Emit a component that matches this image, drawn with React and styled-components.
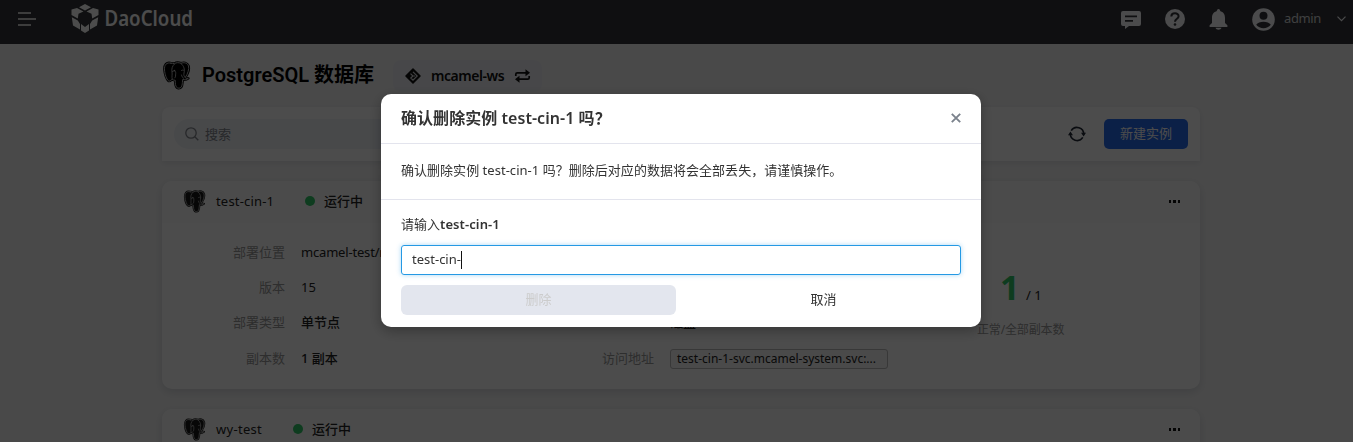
import React from "react";
import styled, { createGlobalStyle } from "styled-components";

const GlobalStyle = createGlobalStyle`
  * { box-sizing: border-box; }
  html, body { margin: 0; height: 442px; overflow: hidden; }
  body {
    background: #f5f5f5;
    color: #222;
    font: 13px/20px "Noto Sans", "Noto Sans CJK SC", sans-serif;
  }
  button, input { font: inherit; border: 0; padding: 0; background: none; }
`;

const Page = styled.div`
  height: 442px;
  overflow: hidden;
`;

const Navbar = styled.header`
  display: flex;
  align-items: center;
  height: 44px;
  padding: 0 7px 6px 18px;
  background: #333539;
  color: #fff;
  svg { display: block; flex: none; }
`;

const Brand = styled.div`
  margin-left: 35px;
  svg { overflow: visible; }
`;

const NavActions = styled.div`
  display: flex;
  align-items: center;
  margin-left: auto;
  color: #fbfbff;
`;

const NavIcon = styled.div`
  margin-right: ${(p) => p.$gap}px;
`;

const UserName = styled.span`
  width: 36px;
  margin: -2px 17px 0 0;
  font-size: 13px;
  letter-spacing: -0.4px;
  color: #d4d4d8;
`;

const Content = styled.main`
  width: 1038px;
  margin-left: 162px;
`;

const TitleRow = styled.div`
  display: flex;
  align-items: center;
  height: 63px;
  color: #000;
`;

const Title = styled.h1`
  margin: -1px 19px 0 11px;
  font: 600 20px/30px Roboto, "Noto Sans CJK SC", sans-serif;
  width: 172px;
  white-space: nowrap;
`;

const Workspace = styled.div`
  display: flex;
  align-items: center;
  gap: 9px;
  width: 149px;
  height: 32px;
  padding-left: 12px;
  border-radius: 8px;
  background: #eeeff3;
  color: #111;
  font: 600 14px/20px "Noto Sans", sans-serif;
  span { width: 74px; margin-left: 1px; letter-spacing: -0.45px; white-space: nowrap; }
`;

const Toolbar = styled.section`
  display: flex;
  align-items: center;
  height: 54px;
  padding: 0 12px;
  border-radius: 8px 8px 0 0;
  background: #fff;
  box-shadow: 0 2px 6px rgba(40, 60, 90, 0.1);
`;

const Search = styled.div`
  display: flex;
  align-items: center;
  gap: 6px;
  width: 480px;
  height: 30px;
  padding: 0 0 1px 11px;
  border-radius: 15px;
  background: #f0f3f9;
  color: #83868c;
`;

const Refresh = styled.div`
  margin-left: auto;
  margin-right: 18px;
  color: #222a38;
  svg { display: block; }
`;

const CreateButton = styled.button`
  width: 84px;
  height: 30px;
  padding-bottom: 2px;
  border-radius: 5px;
  background: #266bee;
  color: #fff;
`;

const Card = styled.section`
  height: 208px;
  margin-top: 20px;
  border-radius: 10px;
  background: #fff;
  box-shadow: 0 3px 10px rgba(30, 45, 70, 0.14);
`;

const CardHeader = styled.div`
  display: flex;
  align-items: center;
  height: 42px;
  padding: 0 20px 2px 21px;
  border-radius: 10px 10px 0 0;
  background: #fbfbfb;
`;

const InstanceName = styled.span`
  width: ${(p) => p.$width}px;
  margin-left: 10px;
  letter-spacing: ${(p) => p.$spacing}px;
`;

const StatusDot = styled.i`
  width: 10px;
  height: 10px;
  margin-right: 9px;
  border-radius: 50%;
  background: #30c868;
`;

const Status = styled.span`
  margin-top: -1px;
  font-weight: 500;
`;

const MoreDots = styled.div`
  display: flex;
  gap: 2px;
  margin: 1px 0 0 auto;
  i { width: 2.5px; height: 2.5px; background: #111; }
`;

const CardBody = styled.div`
  display: grid;
  grid-template-columns: 369px 369px 300px;
  padding-top: 11px;
`;

const Fields = styled.dl`
  display: grid;
  grid-template-columns: 123px 1fr;
  grid-auto-rows: 35.4px;
  column-gap: 16px;
  align-items: center;
  margin: 0;
`;

const Label = styled.dt`
  text-align: right;
  color: #999;
`;

const Value = styled.dd`
  margin: 0;
  white-space: nowrap;
  font-weight: ${(p) => (p.$strong ? 500 : 400)};
  letter-spacing: ${(p) => p.$spacing || 0}px;
`;

const Address = styled.div`
  width: 218px;
  height: 20px;
  margin-top: 2px;
  padding: 0 6px;
  border: 1px solid #bbb;
  border-radius: 3px;
  background: #f7f7f7;
  font-size: 12px;
  line-height: 18px;
  overflow: hidden;
`;

const Replicas = styled.div`
  padding: 33px 0 0 77px;
`;

const ReplicaCount = styled.div`
  display: flex;
  align-items: baseline;
  gap: 9px;
  padding-left: 23px;
  height: 53px;
  line-height: 40px;
  strong { font: 700 34px/40px "Noto Sans", sans-serif; color: #30c868; width: 17px; }
`;

const ReplicaCaption = styled.div`
  font-size: 12px;
  line-height: 20px;
  letter-spacing: -0.15px;
  color: #999;
`;

const Backdrop = styled.div`
  position: fixed;
  inset: 0;
  display: flex;
  justify-content: center;
  align-items: flex-start;
  padding: 94px 0 0 9px;
  background: rgba(0, 0, 0, 0.7);
`;

const Dialog = styled.div`
  width: 600px;
  height: 233px;
  border-radius: 10px;
  background: #fff;
  color: #333;
  box-shadow: 0 4px 14px rgba(0, 0, 0, 0.3);
`;

const DialogHeader = styled.div`
  display: flex;
  align-items: center;
  justify-content: space-between;
  height: 50px;
  padding: 0 20px 2px;
  border-bottom: 1px solid #e3e4ed;
  h2 {
    margin: 0;
    font-size: 16px;
    line-height: 24px;
    font-weight: 600;
    letter-spacing: 0.05px;
  }
`;

const DialogMessage = styled.p`
  height: 56px;
  margin: 0;
  padding: 16px 20px;
  border-bottom: 1px solid #e3e4ed;
  letter-spacing: 0.03px;
`;

const DialogForm = styled.div`
  padding: 14px 20px 12px;
`;

const Prompt = styled.div`
  margin-bottom: 11px;
  b { letter-spacing: 0.1px; font-weight: 600; }
`;

const ConfirmField = styled.div`
  display: flex;
  align-items: center;
  height: 30px;
  padding-left: 10px;
  border: 1px solid #2599e4;
  border-radius: 3px;
  box-shadow: 0 0 5px rgba(37, 153, 228, 0.38);
  span { margin-top: -2px; }
`;

const Caret = styled.i`
  width: 1px;
  height: 18px;
  background: #111;
`;

const DialogActions = styled.div`
  display: grid;
  grid-template-columns: 1fr 1fr;
  gap: 10px;
  margin-top: 10px;
`;

const DialogButton = styled.button`
  height: 30px;
  padding-bottom: 2px;
  border-radius: 6px;
  color: ${(p) => (p.$muted ? "#ccc" : "#333")};
  background: ${(p) => (p.$muted ? "#e3e6ee" : "transparent")};
`;

function Logo() {
  return (
    <svg width="122" height="32" viewBox="0 0 122 32" fill="#fff">
      <path d="M14 1l6 3.2-6 3.3-6-3.3zM.500 6.500L6 5l6.500 3.500-5 2.200-.7 4.800L.500 12zM27.500 6.500L22 5l-6.500 3.500 5 2.200.7 4.800 6.300-3.500zM.800 14.200l6 3.300L9 21v5.500L2 22.500zM27.200 14.200l-6 3.300L19 21v5.500l7-4zM10 21l4 3 4-3v6.600L14 30l-4-2.400z" />
      <text x="33.500" y="22.500" textLength="88.500" lengthAdjust="spacingAndGlyphs" fontFamily="Noto Sans" fontSize="21.500" fontWeight="600">DaoCloud</text>
    </svg>
  );
}

const ELEPHANT =
  "M8.500 2.200C4 .900 1.600 4 2 9c.300 4 2 9.500 4 10.800 1.400.900 2.400-.600 3.600-1.600.8.800 1.900 1 3 .900.400 2.400-.200 7 2.600 7.900 3.400.900 4.500-1.800 4.700-5.500l.300-3c2 .500 4 .200 5.600-1.200-1.700.200-3.200-.100-3-.900 2.400-3.500 4-8.500 3.200-11.400C24.700 1.400 21 1.200 18.500 2.300 16 1.300 13.500 1.500 12 2.700 10.800 2.300 9.600 2.300 8.500 2.200z";

function Elephant({ size, color, line = "#bbb" }) {
  return (
    <svg width={size} height={size} viewBox="0 0 28 29" strokeLinejoin="round" strokeLinecap="round">
      <path d={ELEPHANT} fill={color} stroke={color} strokeWidth="2.600" />
      <path d={ELEPHANT} fill={color} stroke={line} strokeWidth="1" />
      <path d="M12 3C9.500 5 9 8 9.500 11c.500 3-.500 4.500.200 7M18.500 2.500c3 2.500 4 6 3 9.500-.600 2.500.500 3.500.8 4M10 10.500c2-1.500 3.500-.500 3.200 2-.300 2 .300 3.500-1 4.500M19 9.500c.900-.600 1.800-.600 2.500 0M19 14c.300 1.500 1 2.500 2 3.300" fill="none" stroke={line} strokeWidth=".9" />
      <circle cx="12" cy="9.500" r=".8" fill={line} />
    </svg>
  );
}

function Instance({ name, width, spacing, children }) {
  return (
    <Card>
      <CardHeader>
        <Elephant size={23} color="#181818" />
        <InstanceName $width={width} $spacing={spacing}>{name}</InstanceName>
        <StatusDot />
        <Status>运行中</Status>
        <MoreDots><i /><i /><i /></MoreDots>
      </CardHeader>
      {children}
    </Card>
  );
}

export default function App() {
  return (
    <>
      <GlobalStyle />
      <Page>
        <Navbar>
          <svg width="18" height="14" viewBox="0 0 18 14" stroke="#fff" strokeWidth="1.7">
            <path d="M0 1h13M0 7h18M0 13h13" />
          </svg>
          <Brand><Logo /></Brand>
          <NavActions>
            <NavIcon $gap={24}>
              <svg width="20" height="19" viewBox="0 0 20 19" fill="currentColor">
                <path fillRule="evenodd" d="M2 1h16a2 2 0 012 2v11a2 2 0 01-2 2H8l-4 3v-3H2a2 2 0 01-2-2V3a2 2 0 012-2zm2 4.500V7.300h12V5.500zM4 10v1.800h8V10z" />
              </svg>
            </NavIcon>
            <NavIcon $gap={24}>
              <svg width="20" height="20" viewBox="0 0 20 20">
                <circle cx="10" cy="10" r="10" fill="currentColor" />
                <path d="M6.300 7.500C6.500 3 13.700 3.500 13.600 7.300c0 2.500-3.600 2.500-3.600 5.500" fill="none" stroke="#333539" strokeWidth="2" />
                <circle cx="10" cy="15.500" r="1.300" fill="#333539" />
              </svg>
            </NavIcon>
            <NavIcon $gap={24}>
              <svg width="19" height="21" viewBox="0 0 19 21" fill="currentColor">
                <path d="M9.500 0C11 0 11 1.800 11.500 2.200 15 3.200 16 6 16 9v5l2.400 2.200V18H.6v-1.800L3 14V9c0-3 1-5.800 4.500-6.800C8 1.800 8 0 9.500 0zM6.500 18.800h6c-.5 2.500-5.500 2.500-6 0z" />
              </svg>
            </NavIcon>
            <NavIcon $gap={9}>
              <svg width="23" height="23" viewBox="0 0 23 23">
                <circle cx="11.500" cy="11.500" r="11.300" fill="currentColor" />
                <circle cx="11.500" cy="7.800" r="4" fill="#333539" />
                <path d="M4.200 16.800c2.500-4 12.100-4 14.600 0-3.500 4.600-11.100 4.600-14.600 0z" fill="#333539" />
              </svg>
            </NavIcon>
            <UserName>admin</UserName>
            <svg width="9" height="6" viewBox="0 0 9 6" fill="none" stroke="currentColor" strokeWidth="1.200"><path d="M.5.7l4 4 4-4" /></svg>
          </NavActions>
        </Navbar>
        <Content>
          <TitleRow>
            <Elephant size={29} color="#000" />
            <Title>PostgreSQL 数据库</Title>
            <Workspace>
              <svg width="16" height="16" viewBox="0 0 16 16">
                <path d="M8 1L15 8 8 15 1 8z" fill="#111" stroke="#111" strokeWidth="1.500" strokeLinejoin="round" />
                <path d="M8 3.800L12.200 8 8 12.200 5.800 10 8 8 5.500 5.600M8 8h2" fill="none" stroke="#d8d9dd" strokeWidth="1.200" />
              </svg>
              <span>mcamel-ws</span>
              <svg width="17" height="14" viewBox="0 0 17 14" fill="none" stroke="#111" strokeWidth="1.700">
                <path d="M1.800 7V5.300q0-1.500 1.500-1.500H14M15.200 7v1.700q0 1.500-1.500 1.500H3" />
                <path d="M11.500 .300l4.500 3.500L11.500 7.300zM5.500 6.700L1 10.200 5.500 13.700z" fill="#111" stroke="none" />
              </svg>
            </Workspace>
          </TitleRow>
          <Toolbar>
            <Search>
              <svg width="14" height="14" viewBox="0 0 14 14" fill="none" stroke="currentColor" strokeWidth="1.300"><circle cx="6" cy="6" r="5.200" /><path d="M9.800 9.800l3.500 3.500" /></svg>
              搜索
            </Search>
            <Refresh>
              <svg width="18" height="16" viewBox="0 0 18 16">
                <path d="M3.200 4.600A6.800 6.800 0 0115.700 8.500M14.800 11.400A6.800 6.800 0 012.300 7.500" fill="none" stroke="currentColor" strokeWidth="1.600" />
                <path d="M0 9.200l2.400-3.700L5 9.200zM13 6.800h5l-2.400 3.700z" fill="currentColor" />
              </svg>
            </Refresh>
            <CreateButton>新建实例</CreateButton>
          </Toolbar>
          <Instance name="test-cin-1" width={89} spacing={0.18}>
            <CardBody>
              <Fields>
                <Label>部署位置</Label><Value $spacing={-0.18}>mcamel-test/m1</Value>
                <Label>版本</Label><Value>15</Value>
                <Label>部署类型</Label><Value $strong>单节点</Value>
                <Label>副本数</Label><Value $strong>1 副本</Value>
              </Fields>
              <Fields>
                <Label>资源配额</Label><Value $strong>CPU: 1 Core</Value>
                <Label /><Value $strong>内存: 1 GB</Value>
                <Label /><Value $strong>磁盘: 1 GB</Value>
                <Label>访问地址</Label><Value><Address>test-cin-1-svc.mcamel-system.svc:...</Address></Value>
              </Fields>
              <Replicas>
                <ReplicaCount><strong>1</strong><span>/ 1</span></ReplicaCount>
                <ReplicaCaption>正常/全部副本数</ReplicaCaption>
              </Replicas>
            </CardBody>
          </Instance>
          <Instance name="wy-test" width={77} spacing={0.3} />
        </Content>
      </Page>
      <Backdrop>
        <Dialog role="dialog">
          <DialogHeader>
            <h2>确认删除实例 test-cin-1 吗？</h2>
            <svg width="10" height="10" viewBox="0 0 10 10" stroke="#7b828c" strokeWidth="1.900"><path d="M.8.8l8.400 8.400M9.200.8L.8 9.200" /></svg>
          </DialogHeader>
          <DialogMessage>确认删除实例 test-cin-1 吗？删除后对应的数据将会全部丢失，请谨慎操作。</DialogMessage>
          <DialogForm>
            <Prompt>请输入<b>test-cin-1</b></Prompt>
            <ConfirmField><span>test-cin-</span><Caret /></ConfirmField>
            <DialogActions>
              <DialogButton $muted disabled>删除</DialogButton>
              <DialogButton>取消</DialogButton>
            </DialogActions>
          </DialogForm>
        </Dialog>
      </Backdrop>
    </>
  );
}
